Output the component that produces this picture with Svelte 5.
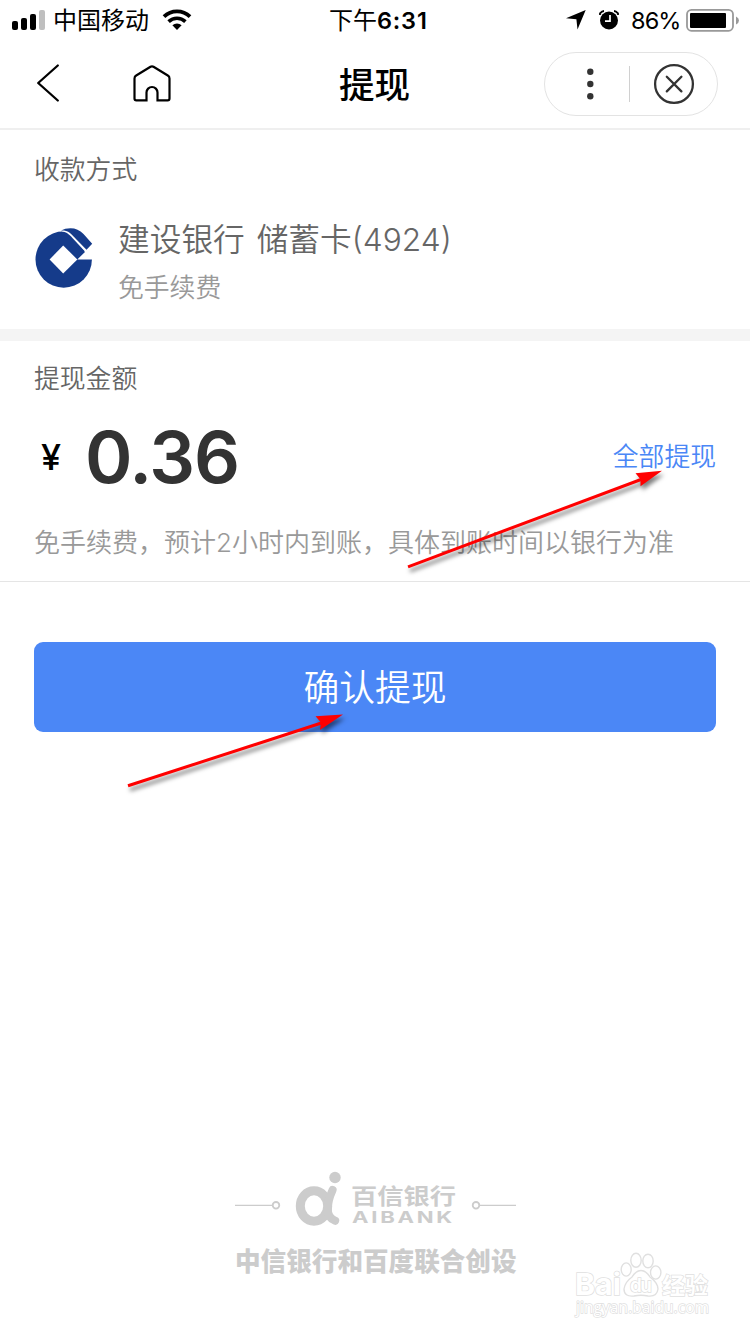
<script>
  const bars = [
    { x: 12, y: 21, h: 9, c: '#000' },
    { x: 21, y: 18, h: 12, c: '#000' },
    { x: 30, y: 14, h: 16, c: '#000' },
    { x: 39, y: 10, h: 20, c: '#bfbfbf' }
  ];
</script>

<div class="page">
  <header class="status">
    <div class="left">
      <svg class="signal" width="46" height="40" viewBox="0 0 46 40">
        {#each bars as b}
          <rect x={b.x} y={b.y} width="6" height={b.h} rx="2" fill={b.c} />
        {/each}
      </svg>
      <span class="carrier">中国移动</span>
      <svg width="30" height="22" viewBox="0 0 30 22">
        <g fill="none" stroke="#000">
          <path d="M2 7.6A18.6 18.6 0 0 1 28 7.6" stroke-width="3.8" />
          <path d="M6.6 12.6A12.2 12.2 0 0 1 23.4 12.6" stroke-width="3.6" />
        </g>
        <path d="M10.4 16.3a6.5 6.5 0 0 1 9.2 0L15 21Z" />
      </svg>
    </div>
    <div class="time">下午<b>6:31</b></div>
    <div class="right">
      <svg width="20" height="20" viewBox="0 0 20 20"><path d="M19.7 0 11.5 19.5 10.4 9.2 0 8.3Z" /></svg>
      <svg class="alarm" width="20" height="20" viewBox="0 0 20 20">
        <circle cx="10" cy="10.5" r="9" />
        <path d="M1 5V3.3Q3 1 5 1M19 5V3.3Q17 1 15 1" fill="none" stroke="#000" stroke-width="1.8" />
        <path d="M11 5V11.2H6" fill="none" stroke="#fff" stroke-width="1.7" />
      </svg>
      <span class="percent">86%</span>
      <svg width="54" height="24" viewBox="0 0 54 24">
        <rect x="1" y="1.8" width="46" height="21" rx="4.5" fill="none" stroke="#999" stroke-width="1.8" />
        <rect x="4" y="5" width="36" height="15" rx="1" />
        <path d="M50 8.5q3 1.3 3 4t-3 4Z" fill="#999" />
      </svg>
    </div>
  </header>

  <nav>
    <svg class="back" width="24" height="40" viewBox="0 0 24 40"><path d="M21.8 2.5 2.2 20 21.8 37.5" fill="none" stroke="#000" stroke-width="2.3" stroke-linecap="round" stroke-linejoin="round" /></svg>
    <svg class="home" width="38" height="40" viewBox="0 0 38 40"><path d="M1.5 14.4Q1.5 12.5 3.2 11.5L17.5 2.8Q19 1.9 20.5 2.8L34.8 11.5Q36.5 12.5 36.5 14.4V34.5Q36.5 36.3 34.7 36.3H24.5V28.5A5.5 5.5 0 0 0 13.5 28.5V36.3H3.3Q1.5 36.3 1.5 34.5Z" fill="none" stroke="#000" stroke-width="2.2" /></svg>
    <h1>提现</h1>
    <div class="capsule">
      <svg width="174" height="64" viewBox="0 0 174 64">
        <rect x=".5" y=".5" width="173" height="63" rx="31.5" fill="none" stroke="#e3e3e3" />
        <g fill="#333"><circle cx="46.3" cy="19.8" r="3.2" /><circle cx="46.3" cy="32" r="3.2" /><circle cx="46.3" cy="44.3" r="3.2" /></g>
        <path d="M85.5 14V50" stroke="#d0d0d0" />
        <g fill="none" stroke="#333" stroke-width="2.3" stroke-linecap="round"><circle cx="130" cy="32" r="18.9" /><path d="m122.8 24.8 14.6 14.6m0-14.6-14.6 14.6" /></g>
      </svg>
    </div>
  </nav>

  <section class="method">
    <h2>收款方式</h2>
    <div class="bank">
      <svg width="60" height="62" viewBox="0 0 60 62">
        <circle cx="28.7" cy="31.5" r="28.2" fill="#153b8a" />
        <path d="M22 2 27 4 34 8 50 24 42.3 31.4H60V0H22Z" fill="#fff" />
        <path d="M26 3.6C31 3.6 34 6.5 37 9.5L49.5 23 41.5 31.4 28 18 20 10Z" fill="#153b8a" />
        <path d="M42.3 31.4 28.2 17.5 14.6 31.4 28.2 45.4Z" fill="#fff" />
        <path d="M26 2.4Q30 .3 35.5.3 43 .3 48.5 6L57.2 15.7 51.5 21.8 36.6 6.6Q33.5 3 29 2.5Z" fill="#153b8a" />
      </svg>
      <div class="detail">
        <div class="name">建设银行 储蓄卡(4924)</div>
        <div class="fee">免手续费</div>
      </div>
    </div>
  </section>

  <section class="amount">
    <h2>提现金额</h2>
    <div class="value"><span class="yen">¥</span><strong>0.36</strong><a href="#all">全部提现</a></div>
    <p>免手续费，预计2小时内到账，具体到账时间以银行为准</p>
  </section>

  <button>确认提现</button>

  <footer>
    <svg width="282" height="60" viewBox="0 0 282 60">
      <g fill="none" stroke="#ccc"><path d="M0 35.3H37M244 35.3H281" stroke-width="1.2" /><circle cx="41" cy="35.3" r="3.3" stroke-width="1.8" /><circle cx="241" cy="35.3" r="3.3" stroke-width="1.8" /></g>
      <circle cx="100" cy="7.5" r="5.7" fill="#ccc" />
      <ellipse cx="79" cy="36" rx="13.7" ry="15.3" fill="none" stroke="#ccc" stroke-width="9" />
      <path d="M97.6 20Q92.5 31 92.8 40 93 48 100.2 50.8" fill="none" stroke="#ccc" stroke-width="8" stroke-linecap="round" />
      <text x="116" y="34" class="cn" textLength="105" lengthAdjust="spacingAndGlyphs">百信银行</text>
      <text x="117" y="53" class="en" textLength="103" lengthAdjust="spacingAndGlyphs">AIBANK</text>
    </svg>
    <div class="caption">中信银行和百度联合创设</div>
  </footer>

  <svg class="arrow" width="750" height="1334" viewBox="0 0 750 1334">
    <g class="mark"><path d="M408 566.8 645 478" /><path class="head" d="M662 470.7 635.5 473.2 640.5 479.3 640.5 486.2Z" /></g>
    <g class="mark"><path d="M128 785.8 326 721.5" /><path class="head" d="M343 714.5 315.5 716.3 321 722.5 320 730Z" /></g>
  </svg>

  <svg class="watermark" width="150" height="80" viewBox="0 0 150 80">
    <g fill="#fff" stroke="#e0e0e0" stroke-width="1.4">
      <text x="5" y="49" class="logo" textLength="46" lengthAdjust="spacingAndGlyphs">Bai</text>
      <ellipse cx="56.2" cy="23.5" rx="5" ry="6.6" /><ellipse cx="66" cy="14.3" rx="5.2" ry="7" /><ellipse cx="78" cy="15" rx="5.2" ry="6.8" /><ellipse cx="85.7" cy="26.5" rx="5.2" ry="6.6" />
      <path d="M71 24.5Q76 24.5 80 31 88 37 88 43 87 51 78 50 71 48.5 64 50 54 51 54 43 55 36 62 31 66 24.5 71 24.5Z" />
      <text x="60" y="46" class="du" textLength="22">du</text>
      <text x="92" y="48" class="exp" textLength="46" lengthAdjust="spacingAndGlyphs">经验</text>
      <text x="6" y="67" class="url" textLength="133">jingyan.baidu.com</text>
    </g>
  </svg>
</div>

<style>
  :global(body) { margin: 0; background: #fff; }
  .page { position: relative; width: 750px; height: 1334px; overflow: hidden; background: #fff; color: #000; font-family: Inter, "Noto Sans CJK SC", sans-serif; }
  svg { display: block; flex: none; }
  h1, h2, p { margin: 0; }
  .status { display: grid; grid-template-columns: 300px 1fr 300px; height: 40px; }
  .left, .right { display: flex; align-items: center; height: 40px; }
  .carrier { margin: 0 9px 0 7px; width: 100px; font-size: 24px; line-height: 38px; padding-top: 2px; white-space: nowrap; }
  .time { padding: 2px 0 0 29px; height: 38px; font-size: 24px; line-height: 38px; white-space: nowrap; }
  .time b { font-weight: 600; font-size: 23.5px; letter-spacing: .8px; }
  .right { padding-left: 116px; }
  .alarm { margin-left: 13px; }
  .percent { width: 49px; margin: 0 6px 0 12px; font-size: 23.5px; letter-spacing: -.9px; }
  nav { display: flex; align-items: flex-start; height: 88px; border-bottom: 2px solid #efefef; }
  .back { margin: 23px 0 0 36px; }
  .home { margin: 24px 0 0 73px; }
  h1 { margin: 22px 0 0 168px; width: 72px; font-size: 35.6px; font-weight: 500; line-height: 48px; white-space: nowrap; }
  .capsule { margin: 12px 0 0 133px; }
  h2 { font-size: 25.8px; font-weight: 350; line-height: 38px; color: #666; }
  .method { height: 178px; padding: 21px 34px 0; border-bottom: 12px solid #f4f4f4; }
  .bank { display: flex; margin-top: 30px; padding-left: 1px; }
  .bank svg { margin-top: 9px; }
  .detail { margin-left: 23px; }
  .name { font-size: 31.7px; font-weight: 350; line-height: 42px; color: #666; white-space: nowrap; word-spacing: 3px; }
  .fee { margin-top: 8px; font-size: 25.8px; font-weight: 350; line-height: 38px; color: #999; }
  .amount { height: 221px; padding: 19px 34px 0; border-bottom: 1px solid #e5e5e5; }
  .value { display: flex; align-items: center; height: 90px; margin-top: 14px; }
  .yen { width: 51px; padding-left: 7px; box-sizing: border-box; font-size: 36px; font-weight: 500; }
  .value strong { font-size: 72px; font-weight: 600; line-height: 90px; color: #333; letter-spacing: -1.2px; }
  .value a { margin: 0 0 6px auto; font-size: 25.8px; font-weight: 350; color: #4a87f6; text-decoration: none; }
  .amount p { margin-top: 22px; font-size: 26px; font-weight: 350; line-height: 38px; color: #999; white-space: nowrap; }
  button { display: block; width: 682px; height: 90px; margin: 60px 34px 0; padding: 3px 0 0; border: 0; border-radius: 9px; background: #4b87f6; color: #fff; font: 350 35.8px/87px Inter, "Noto Sans CJK SC", sans-serif; }
  footer { display: flex; flex-direction: column; margin: 438px 0 0 235px; color: #ccc; }
  .cn { font: 700 22px "Noto Sans CJK SC", sans-serif; fill: #ccc; }
  .en { font: 700 16px Inter, sans-serif; letter-spacing: 2px; fill: #ccc; }
  .caption { margin-top: 14px; font-size: 25.6px; font-weight: 900; line-height: 36px; white-space: nowrap; }
  .arrow { position: absolute; left: 0; top: 0; pointer-events: none; }
  .mark { fill: none; stroke: #f00; stroke-width: 3; filter: drop-shadow(2px 4px 2px rgba(0, 0, 0, .5)); }
  .head { fill: #f00; stroke: none; }
  .watermark { position: absolute; left: 570px; top: 1246px; }
  .watermark text { paint-order: stroke; }
  .logo { font: 700 30px Inter, sans-serif; }
  .du { font: 600 19px Inter, sans-serif; }
  .exp { font: 700 23px "Noto Sans CJK SC", sans-serif; }
  .url { font: 400 15.5px "Open Sans", sans-serif; }
</style>
